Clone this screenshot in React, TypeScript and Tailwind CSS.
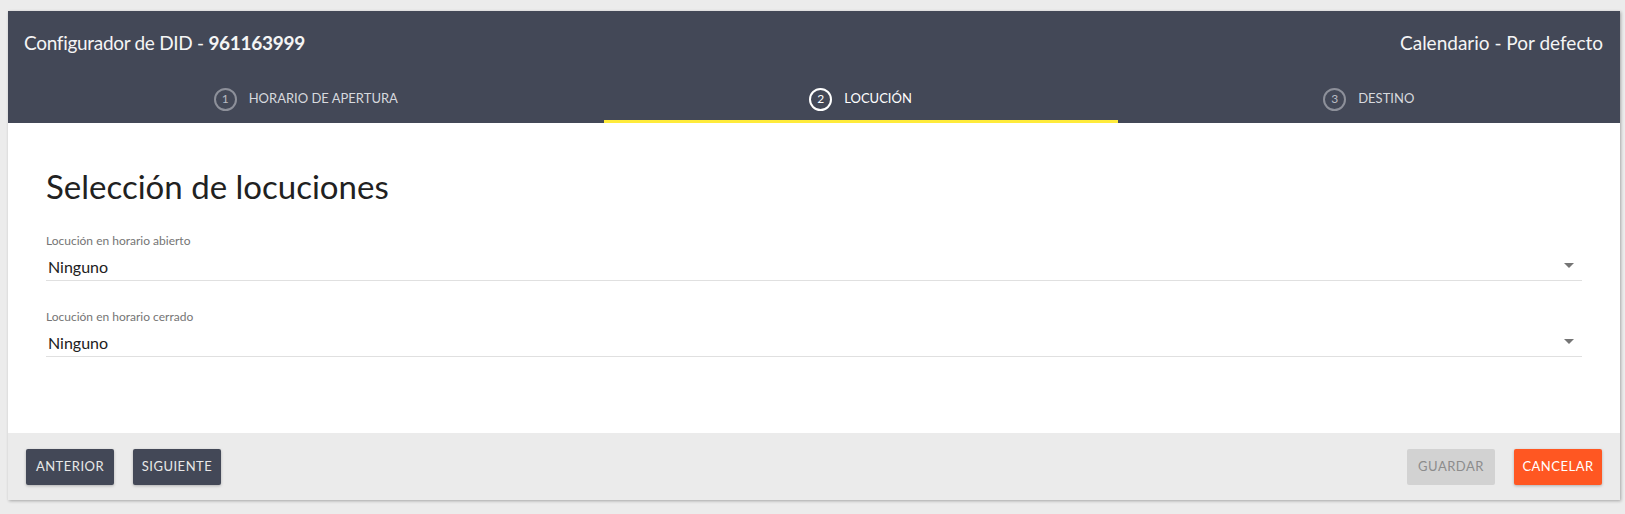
const steps = [
  { n: 1, label: "HORARIO DE APERTURA", active: false },
  { n: 2, label: "LOCUCIÓN", active: true },
  { n: 3, label: "DESTINO", active: false },
];

function SelectField({ label, value }: { label: string; value: string }) {
  return (
    <div className="flex flex-col">
      <label className="text-[12px] leading-4 text-[#757575]">{label}</label>
      <div className="mt-[4px] flex h-[28px] items-center justify-between border-b border-[#e0e0e0] pl-[2px] pr-[8px]">
        <span className="text-[16px] text-[#212121]">{value}</span>
        <svg width="10" height="5" viewBox="0 0 10 5" className="mb-[2px]">
          <path d="M0 0h10L5 5z" fill="#757575" />
        </svg>
      </div>
    </div>
  );
}

export default function App() {
  return (
    <div
      className="min-h-[514px] bg-[#ececec] pl-[8px] pr-[5px] pt-[11px]"
      style={{ fontFamily: "Lato, 'Noto Sans', sans-serif" }}
    >
      <div className="flex flex-col bg-white shadow-[1px_1px_3px_rgba(0,0,0,0.3)]">
        <header className="bg-[#434857] text-white">
          <div className="flex h-[64px] items-center justify-between pl-[16px] pr-[17px]">
            <h1 className="text-[19px] font-normal tracking-[-0.3px] text-[#f5f5f5]">
              Configurador de DID - <span className="font-bold">961163999</span>
            </h1>
            <span className="text-[19px] text-[#f5f5f5]">Calendario - Por defecto</span>
          </div>
          <nav className="flex h-[48px]">
            {steps.map((s) => (
              <div
                key={s.n}
                className={
                  s.active
                    ? "flex grow items-center justify-center gap-[12px] border-b-[3px] border-[#ffeb3b] pt-[3px] text-white"
                    : "flex grow items-center justify-center gap-[12px] border-b-[3px] border-transparent pt-[3px] text-[#d7d9de]"
                }
              >
                <span
                  className={
                    s.active
                      ? "flex size-[23px] items-center justify-center rounded-full border-2 border-white text-[12px]"
                      : "flex size-[23px] items-center justify-center rounded-full border-2 border-[#8d909a] text-[12px] text-[#b9bcc4]"
                  }
                >
                  {s.n}
                </span>
                <span className="text-[13px]">{s.label}</span>
              </div>
            ))}
          </nav>
        </header>

        <main className="h-[310px] px-[38px] pt-[43px]">
          <h2 className="text-[33px] leading-[40px] text-[#212121]">Selección de locuciones</h2>
          <div className="mt-[27px] flex flex-col gap-[28px]">
            <SelectField label="Locución en horario abierto" value="Ninguno" />
            <SelectField label="Locución en horario cerrado" value="Ninguno" />
          </div>
        </main>

        <footer className="flex h-[67px] items-center justify-between bg-[#ebebeb] px-[18px]">
          <div className="flex gap-[19px]">
            <button className="h-[36px] w-[88px] rounded-[2px] bg-[#434857] text-[13px] tracking-[0.5px] text-[#e8e8e8] shadow-[0_1px_3px_rgba(0,0,0,0.25)]">
              ANTERIOR
            </button>
            <button className="h-[36px] w-[88px] rounded-[2px] bg-[#434857] text-[13px] tracking-[0.5px] text-[#e8e8e8] shadow-[0_1px_3px_rgba(0,0,0,0.25)]">
              SIGUIENTE
            </button>
          </div>
          <div className="flex gap-[19px]">
            <button className="h-[36px] w-[88px] rounded-[2px] bg-[#d2d2d2] text-[13px] tracking-[0.5px] text-[#8c8c8c]">
              GUARDAR
            </button>
            <button className="h-[36px] w-[88px] rounded-[2px] bg-[#ff5722] text-[13px] tracking-[0.5px] text-white shadow-[0_1px_3px_rgba(0,0,0,0.25)]">
              CANCELAR
            </button>
          </div>
        </footer>
      </div>
    </div>
  );
}
